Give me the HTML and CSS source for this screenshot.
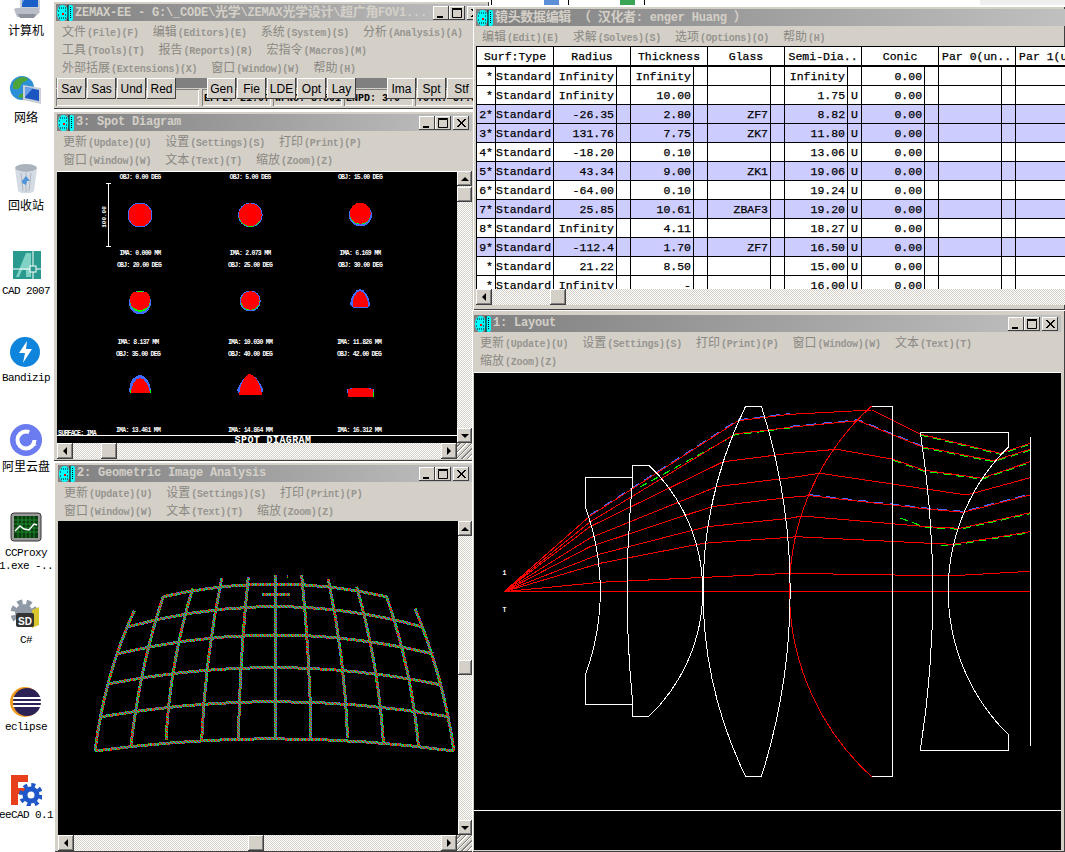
FILE: index.html
```html
<!DOCTYPE html>
<html lang="zh">
<head>
<meta charset="utf-8">
<title>ZEMAX-EE</title>
<link rel="stylesheet" href="styles.css">
</head>
<body>
<svg class="defs" width="0" height="0" aria-hidden="true">
  <symbol id="zx" viewBox="0 0 16 16">
    <ellipse cx="5.5" cy="8" rx="5.5" ry="8" fill="#00ffff"/>
    <rect x="11" y="0" width="5" height="16" rx="2" fill="#00ffff"/>
    <path d="M11 0v16" stroke="#000"/>
    <path d="M2 3h7M1 6h2M8 6h2M1 10h2M8 10h2M2 13h7M13.5 2v12" stroke="#000" stroke-dasharray="1 1" fill="none"/>
    <rect x="5" y="8" width="2" height="2" fill="#ff0000"/>
  </symbol>
  <symbol id="mn" viewBox="0 0 16 14"><rect x="4" y="10" width="6" height="2" fill="#000"/></symbol>
  <symbol id="mx" viewBox="0 0 16 14"><path d="M3.5 3.5h9v8h-9zM3 2.5h10" fill="none" stroke="#000"/></symbol>
  <symbol id="cl" viewBox="0 0 16 14"><path d="M4 3l8 8M12 3l-8 8M5 3l8 8M13 3l-8 8" fill="none" stroke="#000"/></symbol>
</svg>

<div class="desktop">
  <svg class="behind" viewBox="0 0 592 8" width="592" height="8" aria-hidden="true">
    <path class="bk" d="M18.5 0v5M95.5 0v5M171.5 0v5"/>
    <rect x="71" y="0" width="15" height="5" fill="#5b8fd8"/>
    <rect x="147" y="0" width="15" height="5" fill="#3aa655"/>
    <rect x="507" y="0" width="85" height="5" fill="#eeeeee"/>
  </svg>

  <nav class="icons">
    <div class="ico">
      <svg viewBox="0 0 32 32" class="pic"><path d="M10 2h20v20H10z" fill="#c9ced6"/><path d="M12 2h16v17H12z" fill="#1a5fc8"/><path d="M12 2h8l-8 14z" fill="#6aa0ea"/><path d="M4 21l2-1h22l2 4-5 5H7z" fill="#b9bec6"/><path d="M8 26h18l-2 4H10z" fill="#8c929b"/></svg>
      <span class="cap"><span class="cn">计算机</span></span>
    </div>
    <div class="ico">
      <svg viewBox="0 0 32 32" class="pic"><circle cx="12" cy="13" r="12" fill="#2d8fd6"/><path d="M3 8c5-7 12-7 15-4-2 4-6 2-7 6s-5 6-8 3zM8 22c2-5 7-4 10-3l-2 5z" fill="#4da53a"/><path d="M13 10l18 3v16l-18-4z" fill="#c9ced6"/><path d="M15 12l14 3v11l-14-3z" fill="#1a55c0"/><path d="M15 12l8 1-8 9z" fill="#6aa0ea"/></svg>
      <span class="cap"><span class="cn">网络</span></span>
    </div>
    <div class="ico">
      <svg viewBox="0 0 32 32" class="pic"><ellipse cx="16" cy="5" rx="11" ry="4" fill="#aab2bc"/><path d="M5 6l3 22c2 3 14 3 16 0l3-22c-4 4-18 4-22 0z" fill="#d5dbe2"/><path d="M11 10l2 18M21 10l-2 18M16 10v19" stroke="#aeb6c0"/><path d="M12 18l4-5 4 5-3 0-1 4-4-2z" fill="#4f93d8"/></svg>
      <span class="cap"><span class="cn">回收站</span></span>
    </div>
    <div class="ico">
      <svg viewBox="0 0 32 32" class="pic"><rect x="3" y="1" width="28" height="28" fill="#2a9a8f"/><path d="M6 27L16 3h5v24h-5v-7h-4l-3 7z" fill="#7fd2c4"/><path d="M3 19h28M23 1v28" stroke="#fff"/><rect x="20" y="16" width="6" height="6" fill="#2a9a8f" stroke="#fff"/></svg>
      <span class="cap">CAD 2007</span>
    </div>
    <div class="ico">
      <svg viewBox="0 0 32 32" class="pic"><circle cx="15" cy="15" r="15" fill="#0f84dc"/><path d="M17 4L9 16l6 0-2 10 9-14-6 0z" fill="#fff"/></svg>
      <span class="cap">Bandizip</span>
    </div>
    <div class="ico">
      <svg viewBox="0 0 32 32" class="pic"><circle cx="16" cy="16" r="16" fill="#6a7cf0"/><circle cx="16" cy="16" r="8.5" fill="none" stroke="#fff" stroke-width="4" stroke-dasharray="43 10"/><path d="M20 24l7-3-5-2z" fill="#fff"/></svg>
      <span class="cap"><span class="cn">阿里云盘</span></span>
    </div>
    <div class="ico">
      <svg viewBox="0 0 32 32" class="pic"><rect x="1" y="1" width="30" height="28" rx="3" fill="#9a9a9a" stroke="#333"/><rect x="4" y="4" width="24" height="22" fill="#0b3b12"/><path d="M4 8h24M4 12h24M4 16h24M4 20h24M8 4v22M12 4v22M16 4v22M20 4v22M24 4v22" stroke="#1b8a28"/><path d="M5 19l5-5 4 3 5 1 5-6 3 1" fill="none" stroke="#fff" stroke-width="1.4"/></svg>
      <span class="cap">CCProxy<br>1.exe -..</span>
    </div>
    <div class="ico">
      <svg viewBox="0 0 32 32" class="pic"><circle cx="14" cy="14" r="9" fill="#8f9aa6"/><circle cx="14" cy="14" r="11" fill="none" stroke="#8f9aa6" stroke-width="5" stroke-dasharray="5 4"/><path d="M22 11l7-3v18l-7 3z" fill="#d9c52e"/><rect x="6" y="14" width="18" height="14" rx="2" fill="#333"/><text class="sd" x="15" y="26">SD</text></svg>
      <span class="cap">C#</span>
    </div>
    <div class="ico">
      <svg viewBox="0 0 32 32" class="pic"><circle cx="15" cy="16" r="15" fill="#f09a1f"/><circle cx="17" cy="16" r="14" fill="#2c2255"/><path d="M3 12h28M3 16h28M3 20h28" stroke="#fff" stroke-width="2"/></svg>
      <span class="cap">eclipse</span>
    </div>
    <div class="ico">
      <svg viewBox="0 0 32 32" class="pic"><path d="M1 1h17v7H8v6h8v6H8v11H1z" fill="#e8401c"/><circle cx="21" cy="21" r="6" fill="none" stroke="#1f57c8" stroke-width="5"/><circle cx="21" cy="21" r="10" fill="none" stroke="#1f57c8" stroke-width="4" stroke-dasharray="4 3.85"/></svg>
      <span class="cap">eeCAD 0.1</span>
    </div>
  </nav>

  <section class="win w-main">
    <header class="tb">
      <svg class="zx"><use href="#zx"/></svg>
      <span class="tt">ZEMAX-EE - G:\_CODE\<span class="tc">光学</span>\ZEMAX<span class="tc">光学设计</span>\<span class="tc">超广角</span>FOV1...</span>
      <span class="ctl"><svg class="cb"><use href="#mn"/></svg><svg class="cb"><use href="#mx"/></svg><svg class="cb gap"><use href="#cl"/></svg></span>
    </header>
    <div class="mr">
      <span class="mi"><span class="cn">文件</span>(File)(F)</span>
      <span class="mi"><span class="cn">编辑</span>(Editors)(E)</span>
      <span class="mi"><span class="cn">系统</span>(System)(S)</span>
      <span class="mi"><span class="cn">分析</span>(Analysis)(A)</span>
    </div>
    <div class="mr">
      <span class="mi"><span class="cn">工具</span>(Tools)(T)</span>
      <span class="mi"><span class="cn">报告</span>(Reports)(R)</span>
      <span class="mi"><span class="cn">宏指令</span>(Macros)(M)</span>
    </div>
    <div class="mr">
      <span class="mi"><span class="cn">外部括展</span>(Extensions)(X)</span>
      <span class="mi"><span class="cn">窗口</span>(Window)(W)</span>
      <span class="mi"><span class="cn">帮助</span>(H)</span>
    </div>
    <div class="tools">
      <button class="bt">Sav</button><button class="bt">Sas</button><button class="bt">Und</button><button class="bt">Red</button>
      <button class="bt sep">Gen</button><button class="bt">Fie</button><button class="bt">LDE</button><button class="bt">Opt</button><button class="bt">Lay</button>
      <button class="bt sep">Ima</button><button class="bt">Spt</button><button class="bt">Stf</button>
    </div>
    <div class="status">
      <span class="st s0"></span>
      <span class="st">EFFL: 21.07</span>
      <span class="st">WFNO: 3.501</span>
      <span class="st">ENPD: 3.0</span>
      <span class="st s4">TOTR: 57.5</span>
    </div>
  </section>

  <section class="win w-spot">
    <header class="tb">
      <svg class="zx"><use href="#zx"/></svg>
      <span class="tt">3: Spot Diagram</span>
      <span class="ctl"><svg class="cb"><use href="#mn"/></svg><svg class="cb"><use href="#mx"/></svg><svg class="cb gap"><use href="#cl"/></svg></span>
    </header>
    <div class="mr">
      <span class="mi"><span class="cn">更新</span>(Update)(U)</span>
      <span class="mi"><span class="cn">设置</span>(Settings)(S)</span>
      <span class="mi"><span class="cn">打印</span>(Print)(P)</span>
    </div>
    <div class="mr">
      <span class="mi"><span class="cn">窗口</span>(Window)(W)</span>
      <span class="mi"><span class="cn">文本</span>(Text)(T)</span>
      <span class="mi"><span class="cn">缩放</span>(Zoom)(Z)</span>
    </div>
    <div class="view">
      <svg class="plot" viewBox="57 171 400 272" width="400" height="272">
        <path class="wl" d="M57 171.5h400M57 435.5h400M108.5 183.5v63M106 183.5h5M106 246.5h5"/>
        <g class="sp">
          <circle class="bl" cx="140" cy="215" r="12.5"/><circle class="re" cx="140" cy="215" r="11.5"/>
          <circle class="bl" cx="250.3" cy="215" r="12.3"/><circle class="gr" cx="250.3" cy="215.5" r="11.3"/><circle class="re" cx="250.3" cy="214.7" r="11.3"/>
          <circle class="bl" cx="360.3" cy="215" r="11.5"/><circle class="gr" cx="360.3" cy="214" r="10.5"/><circle class="re" cx="360.3" cy="213.3" r="10.5"/>
          <ellipse class="bl" cx="140" cy="302.5" rx="11" ry="12"/><ellipse class="gr" cx="140" cy="301.5" rx="10" ry="10.5"/><path class="re" d="M133 292h14c3 3 3 6 3 9 0 5-4 9-10 9s-10-4-10-9c0-3 0-6 3-9z"/>
          <ellipse class="bl" cx="250.3" cy="301" rx="10.5" ry="10.5"/><ellipse class="gr" cx="250.3" cy="301" rx="9.5" ry="9.5"/><ellipse class="re" cx="250.3" cy="300.5" rx="9.300" ry="9.300"/>
          <path class="bl" d="M350 305c0-7 5-16 10-16s10 9 10 16l-3 3h-14z"/><path class="re" d="M352.500 307c-1-6 3-16 7.500-16s9 10 8 16z"/>
          <path class="bl" d="M129 391c0-10 6-16 11-16s11 7 11 16l-1 2h-20z"/><path class="re" d="M131 393c0-7 4-15 9-15s9 8 10 15z"/><path class="gr" d="M130 390h1v3h-1zM150 390h1v3h-1z"/>
          <path class="bl" d="M237 390c4-9 9-16 13-16s10 8 13.500 16l-2 5h-22z"/><path class="re" d="M239 395c1-10 6-21 11-21s11 11 12 21z"/>
          <path class="bl" d="M347 389c8-2 19-2 27.500 0l-.5 4-1 4h-25z"/><path class="re" d="M348 397v-8c8-1.500 17-1.500 25 0v8z"/><path class="gr" d="M373 392h1v5h-1z"/>
        </g>
        <g class="lb">
          <text x="140" y="178.500">OBJ: 0.00 DEG</text><text x="250" y="178.500">OBJ: 5.00 DEG</text><text x="360" y="178.500">OBJ: 15.00 DEG</text>
          <text x="140" y="255">IMA: 0.000 MM</text><text x="250" y="255">IMA: 2.073 MM</text><text x="360" y="255">IMA: 6.169 MM</text>
          <text x="139" y="267">OBJ: 20.00 DEG</text><text x="250" y="267">OBJ: 25.00 DEG</text><text x="360" y="267">OBJ: 30.00 DEG</text>
          <text x="138" y="343.500">IMA: 8.137 MM</text><text x="250" y="343.500">IMA: 10.030 MM</text><text x="359" y="343.500">IMA: 11.826 MM</text>
          <text x="138" y="355.500">OBJ: 35.00 DEG</text><text x="250" y="355.500">OBJ: 40.00 DEG</text><text x="359" y="355.500">OBJ: 42.00 DEG</text>
          <text x="138" y="431.500">IMA: 13.461 MM</text><text x="250" y="431.500">IMA: 14.864 MM</text><text x="359" y="431.500">IMA: 16.312 MM</text>
          <text x="77" y="434.500">SURFACE: IMA</text>
          <text class="rot" transform="translate(106 217) rotate(-90)">100.00</text>
          <text class="big" x="273" y="443">SPOT DIAGRAM</text>
        </g>
      </svg>
      <div class="vs">
        <span class="sb up"></span><span class="thumb t-spot-v"></span><span class="fill"></span><span class="sb dn"></span>
      </div>
    </div>
    <div class="hs">
      <span class="sb lf"></span><span class="thumb t-spot-h"></span><span class="fill"></span><span class="sb rt"></span><span class="grip"></span>
    </div>
  </section>

  <section class="win w-geo">
    <header class="tb">
      <svg class="zx"><use href="#zx"/></svg>
      <span class="tt">2: Geometric Image Analysis</span>
      <span class="ctl"><svg class="cb"><use href="#mn"/></svg><svg class="cb"><use href="#mx"/></svg><svg class="cb gap"><use href="#cl"/></svg></span>
    </header>
    <div class="mr">
      <span class="mi"><span class="cn">更新</span>(Update)(U)</span>
      <span class="mi"><span class="cn">设置</span>(Settings)(S)</span>
      <span class="mi"><span class="cn">打印</span>(Print)(P)</span>
    </div>
    <div class="mr">
      <span class="mi"><span class="cn">窗口</span>(Window)(W)</span>
      <span class="mi"><span class="cn">文本</span>(Text)(T)</span>
      <span class="mi"><span class="cn">缩放</span>(Zoom)(Z)</span>
    </div>
    <div class="view">
      <svg class="plot" viewBox="9 183 1200 942" width="400" height="314">
        <defs>
          <pattern id="noise" width="21" height="15" patternUnits="userSpaceOnUse">
            <rect width="21" height="15" fill="#3f6cff"/>
            <path fill="#ff0000" d="M0 0h3v3H0zM9 0h3v3H9zM18 0h3v3h-3zM3 3h3v3H3zM12 3h3v3h-3zM6 6h3v3H6zM15 6h3v3h-3zM0 9h3v3H0zM9 9h3v3H9zM3 12h3v3H3zM18 12h3v3h-3zM18 9h3v3h-3z"/>
            <path fill="#00ff00" d="M6 0h3v3H6zM15 0h3v3h-3zM0 3h3v3H0zM9 3h3v3H9zM18 6h3v3h-3zM3 6h3v3H3zM12 9h3v3h-3zM6 9h3v3H6zM15 12h3v3h-3zM9 12h3v3H9zM15 3h3v3h-3zM0 12h3v3H0z"/>
          </pattern>
        </defs>
        <g class="grid">
          <path d="M120 873Q660 800 1197 873"/>
          <path d="M140 770Q660 680 1180 770"/>
          <path d="M158 672Q660 572 1160 675"/>
          <path d="M185 582Q660 468 1135 582"/>
          <path d="M220 500Q660 380 1100 500"/>
          <path d="M325 410Q660 334 995 410"/>
          <path d="M620 404h85M660 345v490M695 348h3M660 395v20"/>
          <path d="M120 873Q150 640 238 452"/>
          <path d="M228 855Q255 620 325 408"/>
          <path d="M333 840Q345 610 413 385"/>
          <path d="M440 840Q450 600 500 355"/>
          <path d="M550 835Q555 590 580 350"/>
          <path d="M768 835Q765 590 740 345"/>
          <path d="M878 835Q870 600 820 358"/>
          <path d="M985 845Q970 610 905 380"/>
          <path d="M1090 855Q1070 630 995 410"/>
          <path d="M1197 873Q1165 650 1080 445"/>
        </g>
      </svg>
      <div class="vs">
        <span class="sb up"></span><span class="thumb t-geo-v"></span><span class="fill"></span><span class="sb dn"></span>
      </div>
    </div>
    <div class="hs">
      <span class="sb lf"></span><span class="thumb t-geo-h"></span><span class="fill"></span><span class="sb rt"></span><span class="grip"></span>
    </div>
  </section>

  <section class="win w-lde">
    <header class="tb">
      <svg class="zx"><use href="#zx"/></svg>
      <span class="tt"><span class="tc">镜头数据编辑</span> <span class="tc">（</span> <span class="tc">汉化者</span>: enger Huang <span class="tc">）</span></span>
    </header>
    <div class="mr">
      <span class="mi"><span class="cn">编辑</span>(Edit)(E)</span>
      <span class="mi"><span class="cn">求解</span>(Solves)(S)</span>
      <span class="mi"><span class="cn">选项</span>(Options)(O)</span>
      <span class="mi"><span class="cn">帮助</span>(H)</span>
    </div>
    <div class="sheet">
      <table class="lens">
        <colgroup>
          <col class="c0"><col class="c1">
          <col class="v"><col class="u"><col class="v"><col class="u"><col class="v"><col class="u"><col class="v"><col class="u"><col class="v"><col class="u"><col class="v"><col class="u"><col class="v"><col class="u">
        </colgroup>
        <thead>
          <tr><th colspan="2">Surf:Type<th colspan="2">Radius<th colspan="2">Thickness<th colspan="2">Glass<th colspan="2">Semi-Dia..<th colspan="2">Conic<th colspan="2" class="l">Par 0(un..<th colspan="2" class="l">Par 1(un..</tr>
        </thead>
        <tbody>
          <tr><td>*<td>Standard<td>Infinity<td><td>Infinity<td><td><td><td>Infinity<td><td>0.00<td><td><td><td><td></tr>
          <tr><td>*<td>Standard<td>Infinity<td><td>10.00<td><td><td><td>1.75<td>U<td>0.00<td><td><td><td><td></tr>
          <tr class="hl"><td>2*<td>Standard<td>-26.35<td><td>2.80<td><td>ZF7<td><td>8.82<td>U<td>0.00<td><td><td><td><td></tr>
          <tr class="hl"><td>3*<td>Standard<td>131.76<td><td>7.75<td><td>ZK7<td><td>11.80<td>U<td>0.00<td><td><td><td><td></tr>
          <tr><td>4*<td>Standard<td>-18.20<td><td>0.10<td><td><td><td>13.06<td>U<td>0.00<td><td><td><td><td></tr>
          <tr class="hl"><td>5*<td>Standard<td>43.34<td><td>9.00<td><td>ZK1<td><td>19.06<td>U<td>0.00<td><td><td><td><td></tr>
          <tr><td>6*<td>Standard<td>-64.00<td><td>0.10<td><td><td><td>19.24<td>U<td>0.00<td><td><td><td><td></tr>
          <tr class="hl"><td>7*<td>Standard<td>25.85<td><td>10.61<td><td>ZBAF3<td><td>19.20<td>U<td>0.00<td><td><td><td><td></tr>
          <tr><td>8*<td>Standard<td>Infinity<td><td>4.11<td><td><td><td>18.27<td>U<td>0.00<td><td><td><td><td></tr>
          <tr class="hl"><td>9*<td>Standard<td>-112.4<td><td>1.70<td><td>ZF7<td><td>16.50<td>U<td>0.00<td><td><td><td><td></tr>
          <tr><td>*<td>Standard<td>21.22<td><td>8.50<td><td><td><td>15.00<td>U<td>0.00<td><td><td><td><td></tr>
          <tr><td>*<td>Standard<td>Infinity<td><td>-<td><td><td><td>16.00<td>U<td>0.00<td><td><td><td><td></tr>
        </tbody>
      </table>
    </div>
    <div class="hs">
      <span class="sb lf"></span><span class="thumb t-lde-h"></span><span class="fill"></span>
    </div>
  </section>

  <section class="win w-lay">
    <header class="tb">
      <svg class="zx"><use href="#zx"/></svg>
      <span class="tt">1: Layout</span>
      <span class="ctl"><svg class="cb"><use href="#mn"/></svg><svg class="cb"><use href="#mx"/></svg><svg class="cb gap"><use href="#cl"/></svg></span>
    </header>
    <div class="mr">
      <span class="mi"><span class="cn">更新</span>(Update)(U)</span>
      <span class="mi"><span class="cn">设置</span>(Settings)(S)</span>
      <span class="mi"><span class="cn">打印</span>(Print)(P)</span>
      <span class="mi"><span class="cn">窗口</span>(Window)(W)</span>
      <span class="mi"><span class="cn">文本</span>(Text)(T)</span>
    </div>
    <div class="mr">
      <span class="mi"><span class="cn">缩放</span>(Zoom)(Z)</span>
    </div>
    <svg class="plot lay" viewBox="474 372 587 478" width="587" height="478">
      <path class="wl" d="M474 372.500h587M474 810.500h587"/>
      <g class="rays blue">
        <path d="M590 515L738 419.700L790 413.300"/>
        <path d="M790 426.300L858.300 419.700L921.700 445.700"/>
        <path d="M810 494.700L930 508.300L963.300 511.300L1030 494"/>
      </g>
      <g class="rays green">
        <path d="M640 487L735 435L790 428"/>
        <path d="M893.300 460.300L923.300 471L981.700 479.300L1030 462.700"/>
        <path d="M921.700 447.700L993.300 461.700L1030 450.300"/>
        <path d="M920 435L1000 454.300L1030 444.300"/>
        <path d="M900 518L926.700 527.700L960 529.300L1030 513.700"/>
        <path d="M940 545L953.300 545.300L1030 532.700"/>
      </g>
      <g class="rays">
        <path d="M504 591.700H1030"/>
        <path d="M504 591.700L600 582.300L790 573.300L913.300 575.300L960 575.300L1030 571.300"/>
        <path d="M504 591.700L600 563.300L703.300 543.300L790 537.300L796.700 536.700L930 543.300L953.300 544.300L1030 531.700"/>
        <path d="M504 591.700L600 554L706.700 526.700L790 518.300L801.700 516L926.700 526.700L960 528.300L1030 512.700"/>
        <path d="M504 591.700L590 546.700L711.700 506.700L790 497.300L810 495.700L930 509.300L963.300 512.300L1030 495"/>
        <path d="M504 591.700L590 538L716.700 486.700L790 477.700L820 473.300L966.700 495L1030 477.700"/>
        <path d="M504 591.700L590 526.700L723.300 461.700L790 453.300L836.700 449.300L893.300 459.300L923.300 470L981.700 478.300L1030 461.700"/>
        <path d="M504 591.700L590 522L735 434L790 427.300L858.300 420.700L921.700 446.700L993.300 460.700L1030 449.300"/>
        <path d="M504 591.700L590 516L738.300 420.700L790 414.300L871.700 410L920 434L1000 453.300L1030 443.300"/>
        <path d="M871.700 406A250 250 0 0 0 871.700 776.700"/>
      </g>
      <g class="lenses">
        <path d="M632.300 477.300H585.300V507.300A242 242 0 0 1 585.300 675V704.300H632.300"/>
        <path d="M632.300 485A1105 1105 0 0 0 632.300 698V716.300H649A173.500 173.500 0 0 0 649 465.300H632.300Z"/>
        <path d="M745.700 406H761.300A610 610 0 0 1 761.300 776.700H745.700A424 424 0 0 1 745.700 406Z"/>
        <path d="M871.700 406H892.700V776.700H871.700"/>
        <path d="M1008.700 446.700V432.300H920.300A1025 1025 0 0 1 920.300 750.300H1008.700V735A202 202 0 0 1 1008.700 446.700Z"/>
        <path d="M1030.500 437V745.700"/>
      </g>
      <g class="lb"><text x="504" y="575">1</text><text x="504" y="612">T</text></g>
    </svg>
  </section>
</div>
</body>
</html>
```
FILE: styles.css
```css
html, body { margin: 0; padding: 0; background: #fff; }
body { width: 1065px; height: 852px; overflow: hidden; }
.defs { position: absolute; }
.desktop { position: relative; width: 1065px; height: 852px; overflow: hidden; background: #fff; font-family: "Liberation Mono", "Noto Sans CJK SC", monospace; }
.behind { position: absolute; left: 473px; top: 0; }
.bk { stroke: #000; fill: none; }

/* desktop icons */
.icons { display: flex; flex-direction: column; width: 52px; margin-top: -12px; }
.ico { flex: 0 0 87.3px; height: 87.3px; display: flex; flex-direction: column; align-items: center; }
.pic { flex: none; width: 32px; height: 32px; }
.cap { margin-top: 3px; font-size: 11px; line-height: 13px; letter-spacing: -.6px; color: #000; text-align: center; white-space: nowrap; }
.cap .cn { font-size: 12px; letter-spacing: 0; margin: 0; color: #000; font-family: "Noto Sans CJK SC", sans-serif; }
.sd { font: bold 10px "Liberation Sans", sans-serif; fill: #fff; text-anchor: middle; }

/* windows */
.win { position: absolute; z-index: 0; display: flex; flex-direction: column; background: #d4d0c8; box-sizing: border-box; box-shadow: inset 1px 1px #fff, inset -1px -1px #404040; }
.w-main { left: 53px; top: 1px; width: 436px; height: 108px; padding: 3px; }
.w-spot { left: 53px; top: 111px; width: 422px; height: 350px; padding: 3px 3px 0 4px; }
.w-geo { left: 54px; top: 462px; width: 421px; height: 390px; padding: 3px 3px 0 4px; }
.w-lde { left: 473px; top: 6px; width: 592px; height: 304px; padding: 3px 0 0 3px; }
.w-lay { left: 472px; top: 310px; width: 593px; height: 542px; padding: 5px 4px 0 2px; }

.tb { flex: none; display: flex; align-items: center; height: 17px; background: linear-gradient(90deg, #808080, #c0c0c0); }
.zx { flex: none; width: 16px; height: 16px; margin: 0 2px 0 1px; }
.tt { flex: 1; min-width: 0; margin-bottom: 2px; font-size: 12px; line-height: 14px; font-weight: bold; letter-spacing: -.2px; color: #d4d0c8; white-space: pre; }
.tc { font-family: "Noto Sans CJK SC", sans-serif; font-size: 13px; letter-spacing: -.33px; }
.ctl { flex: none; display: flex; padding-right: 3px; }
.cb { width: 16px; height: 14px; background: #d4d0c8; box-shadow: inset -1px -1px #404040, inset 1px 1px #fff; }
.gap { margin-left: 2px; }

.mr { flex: none; display: flex; gap: 14px; height: 18px; align-items: center; padding-left: 6px; font-size: 10px; font-weight: bold; letter-spacing: -.25px; color: #979590; white-space: nowrap; }
.cn { font-family: "Noto Sans CJK SC", sans-serif; font-size: 12px; font-weight: normal; letter-spacing: 0; color: #8a8882; margin-right: 1px; }

/* toolbar + status */
.tools { position: relative; z-index: 1; display: flex; gap: 1px; height: 21px; margin-top: 3px; padding-left: 1px; background: linear-gradient(#808080 10px, transparent 10px); }
.bt { flex: none; width: 29px; height: 21px; padding: 0; border: 0; background: #d4d0c8; box-shadow: inset -1px -1px #404040, inset 1px 1px #fff; font: 12px "Liberation Sans", sans-serif; color: #000; }
.sep { margin-left: 30px; }
.status { display: flex; gap: 2px; height: 18px; margin-top: -10px; font-size: 10px; font-weight: bold; }
.st { flex: 0 0 69px; box-sizing: border-box; padding: 4px 0 0 2px; line-height: 12px; overflow: hidden; white-space: nowrap; box-shadow: inset 1px 1px #808080, inset -1px -1px #fff; }
.s0 { flex-basis: 143px; margin-right: 1px; }
.s4 { flex-basis: 70px; }

/* client views */
.view { flex: none; display: flex; margin-top: 4px; }
.w-geo .view { margin-top: 3px; }
.plot { display: block; flex: none; background: #000; }
.lay { margin-top: 4px; }
.vs { flex: 1; display: flex; flex-direction: column; align-items: stretch; background: repeating-conic-gradient(#d4d0c8 0 25%, #fff 0 50%) 0 0 / 2px 2px; }
.hs { flex: none; display: flex; height: 16px; background: repeating-conic-gradient(#d4d0c8 0 25%, #fff 0 50%) 0 0 / 2px 2px; }
.fill { flex: 1; }
.sb, .thumb { flex: none; display: block; background: #d4d0c8; box-shadow: inset -1px -1px #404040, inset 1px 1px #fff, inset -2px -2px #808080; position: relative; }
.vs .sb, .vs .thumb { height: 15px; }
.hs .sb, .hs .thumb { width: 16px; }
.sb::after { content: ""; position: absolute; left: 50%; top: 50%; width: 0; height: 0; border: 4px solid transparent; }
.up::after { border-bottom-color: #000; transform: translate(-50%, -75%); }
.dn::after { border-top-color: #000; transform: translate(-50%, -25%); }
.lf::after { border-right-color: #000; transform: translate(-75%, -50%); }
.rt::after { border-left-color: #000; transform: translate(-25%, -50%); }
.grip { flex: none; width: 15px; height: 16px; background: repeating-linear-gradient(135deg, #d4d0c8 0 2px, #808080 2px 3px, #fff 3px 4px); }
.t-spot-v { margin-top: 1px; }
.t-spot-h { margin-left: 28px; }
.t-geo-v { margin-top: 124px; }
.t-geo-h { margin-left: 174px; }
.t-lde-h { margin-left: 58px; }

/* svg plots */
.wl { stroke: #fff; fill: none; shape-rendering: crispEdges; }
.sp { shape-rendering: crispEdges; }
.bl { fill: #3f6cff; }
.gr { fill: #00ff00; }
.re { fill: #ff0000; }
.lb text { font: bold 6.500px "Liberation Mono", monospace; letter-spacing: -.75px; fill: #fff; text-anchor: middle; }
.lb .big { font-size: 10px; letter-spacing: .4px; }
.lb .rot { font-size: 6px; letter-spacing: 0; }
.grid path { fill: none; stroke: url(#noise); stroke-width: 9; shape-rendering: crispEdges; }
.rays path { fill: none; stroke: #ff0000; stroke-width: 1; shape-rendering: crispEdges; }
.rays.blue path { stroke: #3f6cff; stroke-dasharray: 10 6; }
.rays.green path { stroke: #00ff00; stroke-dasharray: 8 5; }
.lenses path { fill: none; stroke: #fff; stroke-width: 1; shape-rendering: crispEdges; }

/* lens data table */
.sheet { flex: none; height: 243px; margin-top: 2px; overflow: hidden; background: #fff; }
.lens { border-collapse: collapse; table-layout: fixed; width: 616px; font-size: 11.500px; color: #000; background: #fff; -webkit-text-stroke: .25px #000; }
.c0 { width: 19px; }
.c1 { width: 58px; }
.v { width: 63px; }
.u { width: 14px; }
.lens th { height: 18px; padding: 0; border: 1px solid #000; border-bottom-width: 2px; font-weight: normal; text-align: center; white-space: nowrap; overflow: hidden; }
.lens th.l { text-align: left; padding-left: 3px; }
.lens td { height: 18px; padding: 0 2px 0 0; border: 1px solid #000; text-align: right; white-space: nowrap; overflow: hidden; }
.lens td:nth-child(2) { text-align: left; padding: 0; }
.lens td:nth-child(n+3):nth-child(even) { text-align: center; padding: 0; }
.hl td { background: #ccccff; }
```
